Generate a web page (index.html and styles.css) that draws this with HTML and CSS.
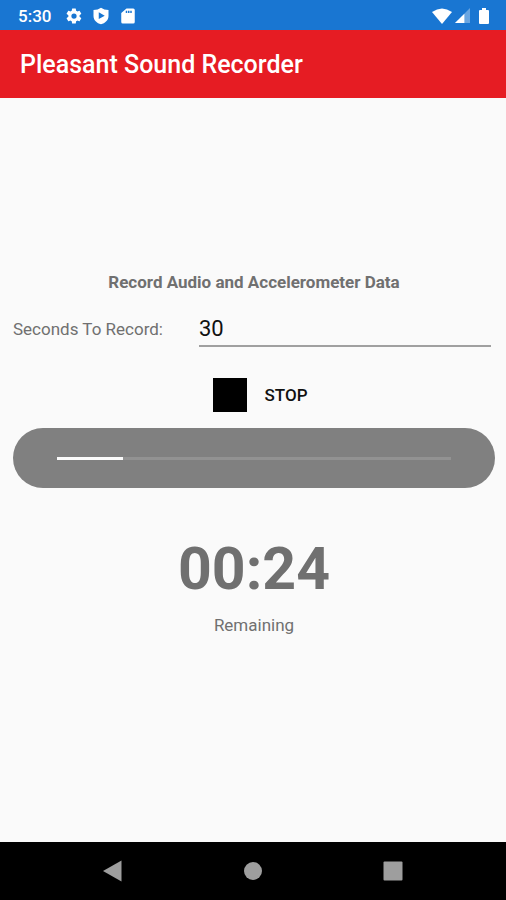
FILE: index.html
```html
<!DOCTYPE html>
<html lang="en">
<head>
<meta charset="utf-8">
<meta name="viewport" content="width=device-width, initial-scale=1">
<title>Pleasant Sound Recorder</title>
<link rel="stylesheet" href="styles.css">
</head>
<body>
<div class="status-bar">
  <time class="clock">5:30</time>
  <div class="notifications">
    <svg class="status-icon" viewBox="0 0 24 24" aria-hidden="true"><path fill-rule="evenodd" d="M19.4 13a7.500 7.500 0 0 0 0-2l2.100-1.650a.5.5 0 0 0 .1-.63l-2-3.460a.5.5 0 0 0-.6-.22l-2.500 1a7.300 7.300 0 0 0-1.700-1L14.400 2.400a.5.5 0 0 0-.5-.4h-4a.5.5 0 0 0-.5.4L9 5.050a7.700 7.700 0 0 0-1.700 1l-2.500-1a.5.5 0 0 0-.6.220l-2 3.460a.5.5 0 0 0 .1.630L4.500 11a8 8 0 0 0 0 2l-2.200 1.650a.5.5 0 0 0-.1.630l2 3.460c.1.220.4.300.6.220l2.500-1c.5.400 1.100.740 1.700 1l.4 2.640c0 .240.200.400.5.400h4c.3 0 .5-.2.500-.4l.4-2.640a7.300 7.300 0 0 0 1.700-1l2.500 1c.2.080.5 0 .6-.220l2-3.460a.5.5 0 0 0-.1-.63zM12 15.500a3.500 3.500 0 1 1 0-7 3.500 3.500 0 0 1 0 7z"/></svg>
    <svg class="status-icon" viewBox="0 0 24 24" aria-hidden="true"><path fill-rule="evenodd" d="M12 1q4 3 10 3v8c0 5.500-4.500 9.700-10 11-5.500-1.300-10-5.500-10-11V4q6 0 10-3zM9 7v9l8-4.500z"/></svg>
    <svg class="status-icon" viewBox="0 0 24 24" aria-hidden="true"><path fill-rule="evenodd" d="M19 2h-9L3 8v12a2 2 0 0 0 2 2h14a2 2 0 0 0 2-2V4a2 2 0 0 0-2-2zM9 5h2v3H9zM12 5h2v3h-2zM15 5h2v3h-2z"/></svg>
  </div>
  <div class="system-icons">
    <svg class="wifi" viewBox="0 0 20 16" aria-hidden="true"><path d="M0 4Q10-3 20 4L10 16z"/></svg>
    <svg class="signal" viewBox="0 0 16 16" aria-hidden="true"><path opacity=".35" d="M16 0v16H0z"/><path d="M10 6v10H0z"/></svg>
    <svg class="battery" viewBox="0 0 12 18" aria-hidden="true"><path d="M4 1h4v2h2a1 1 0 0 1 1 1v12a1 1 0 0 1-1 1H2a1 1 0 0 1-1-1V4a1 1 0 0 1 1-1h2z"/></svg>
  </div>
</div>
<header class="app-bar"><h1>Pleasant Sound Recorder</h1></header>
<main class="recorder">
  <h2>Record Audio and Accelerometer Data</h2>
  <div class="field">
    <label for="seconds">Seconds To Record:</label>
    <input id="seconds" type="text" inputmode="numeric" value="30">
  </div>
  <button class="stop" type="button"><span class="stop-icon"></span>STOP</button>
  <div class="progress-panel">
    <progress value="1" max="6" aria-label="Recording progress"></progress>
  </div>
  <div class="countdown">00:24</div>
  <p class="caption">Remaining</p>
</main>
<nav class="nav-bar">
  <button type="button" aria-label="Back"><svg viewBox="0 0 20 22"><path d="M18.500.5v21L0 11z"/></svg></button>
  <button type="button" aria-label="Home"><svg viewBox="0 0 20 22"><circle cx="10" cy="11" r="9"/></svg></button>
  <button type="button" aria-label="Recent apps"><svg viewBox="0 0 20 22"><rect x="0.500" y="1.500" width="19" height="19" rx="1"/></svg></button>
</nav>
</body>
</html>
```
FILE: styles.css
```css
* {
  box-sizing: border-box;
}

body {
  display: flex;
  flex-direction: column;
  min-height: 100vh;
  margin: 0;
  background: #fafafa;
  color: #707070;
  font: 17px/20px Roboto, sans-serif;
}

h1, h2, p {
  margin: 0;
}

button {
  border: 0;
  padding: 0;
  background: none;
  color: inherit;
  font: inherit;
}

.status-bar {
  display: flex;
  align-items: center;
  height: 30px;
  padding: 1px 16px 0 18px;
  background: #1976d2;
  color: #fff;
}

.status-bar svg {
  display: block;
  fill: #fff;
}

.clock {
  font-weight: 500;
}

.notifications {
  display: flex;
  gap: 9px;
  margin-left: 14px;
}

.status-icon {
  width: 18px;
  height: 18px;
}

.system-icons {
  display: flex;
  align-items: center;
  gap: 3px;
  margin-left: auto;
}

.wifi {
  width: 20px;
  height: 16px;
}

.signal {
  width: 15px;
  height: 15px;
  margin-right: 5px;
}

.battery {
  width: 12px;
  height: 18px;
}

.app-bar {
  display: flex;
  align-items: center;
  height: 68px;
  padding: 2px 20px 0;
  background: #e61c23;
  color: #fff;
}

h1 {
  font-size: 25px;
  line-height: 32px;
  font-weight: 500;
}

.recorder {
  display: flex;
  flex: 1;
  flex-direction: column;
  align-items: center;
  padding: 174px 11px 20px 13px;
}

h2 {
  font-size: 17px;
  line-height: 20px;
  font-weight: 700;
}

.field {
  display: flex;
  align-items: center;
  align-self: stretch;
  gap: 36px;
  margin-top: 20px;
  padding-right: 4px;
}

.field label {
  padding-bottom: 2px;
}

.field input {
  flex: 1;
  min-width: 0;
  height: 35px;
  border: 0;
  border-bottom: 2px solid #a0a0a0;
  padding: 0;
  background: none;
  color: #111;
  font: 22px/26px Roboto, sans-serif;
  outline: 0;
}

.stop {
  display: flex;
  align-items: center;
  gap: 18px;
  margin: 31px 0 16px;
  padding-left: 12px;
  color: #111;
  font-weight: 500;
}

.stop-icon {
  width: 34px;
  height: 34px;
  background: #000;
}

.progress-panel {
  display: flex;
  align-items: center;
  align-self: stretch;
  height: 60px;
  padding: 0 44px;
  border-radius: 30px;
  background: #808080;
}

progress {
  appearance: none;
  display: block;
  width: 100%;
  height: 3px;
  border: 0;
  background: #929292;
}

progress::-webkit-progress-bar {
  background: #929292;
}

progress::-webkit-progress-value {
  background: #fafafa;
}

.countdown {
  margin-top: 46px;
  font-size: 59px;
  line-height: 70px;
  font-weight: 700;
}

.caption {
  margin-top: 11px;
}

.nav-bar {
  display: flex;
  align-items: center;
  justify-content: center;
  gap: 120px;
  height: 58px;
  background: #000;
}

.nav-bar button {
  width: 20px;
  height: 22px;
}

.nav-bar svg {
  display: block;
  fill: #9e9e9e;
}
```
